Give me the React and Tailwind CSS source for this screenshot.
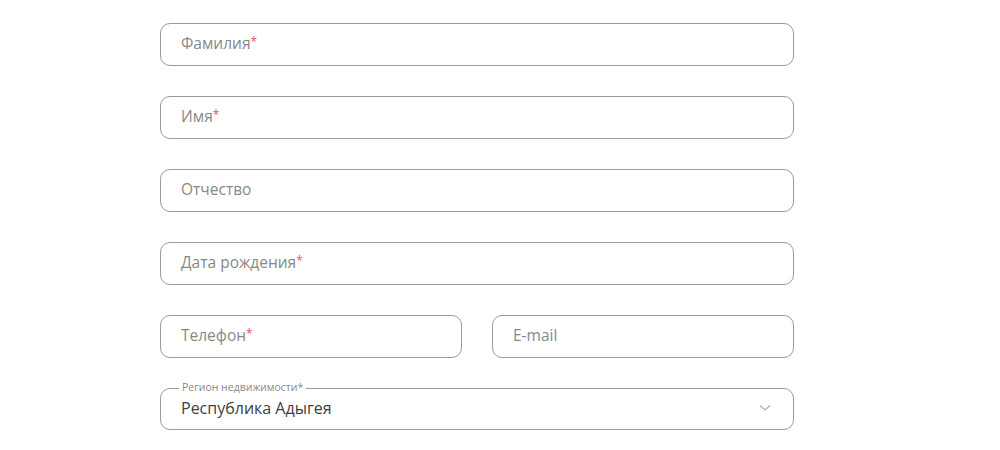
import React from "react";

const font = { fontFamily: '"Open Sans", "Liberation Sans", sans-serif' };

function Field({ label, required, className = "" }) {
  return (
    <div
      className={`h-[43px] rounded-[10px] border border-[#9a9a9a] flex items-center pl-5 pb-[2px] text-[15.5px] text-[#888888] ${className}`}
    >
      <span>
        {label}
        {required && <span className="text-[#e2506a] text-[12px] align-top relative top-[1px]">*</span>}
      </span>
    </div>
  );
}

export default function App() {
  return (
    <div className="w-[1000px] h-[450px] bg-white" style={font}>
      <div className="ml-[160px] w-[634px] pt-[23px] flex flex-col gap-[30px]">
        <Field label="Фамилия" required />
        <Field label="Имя" required />
        <Field label="Отчество" />
        <Field label="Дата рождения" required />
        <div className="flex gap-[30px]">
          <Field label="Телефон" required className="flex-1" />
          <Field label="E-mail" className="flex-1" />
        </div>
        <div className="relative h-[42px] rounded-[10px] border border-[#9a9a9a] flex items-center pl-5 pr-5 pb-[2px] justify-between">
          <span className="absolute -top-[8px] left-[18px] bg-white px-[3px] text-[10.5px] leading-[13px] text-[#8a8a8a]">
            Регион недвижимости*
          </span>
          <span className="text-[16px] text-[#404040]">Республика Адыгея</span>
          <svg width="12" height="8" viewBox="0 0 12 8" className="mr-[2px]">
            <path d="M1 1.5 L6 6 L11 1.5" fill="none" stroke="#b0b0b0" strokeWidth="1.2" />
          </svg>
        </div>
      </div>
    </div>
  );
}
